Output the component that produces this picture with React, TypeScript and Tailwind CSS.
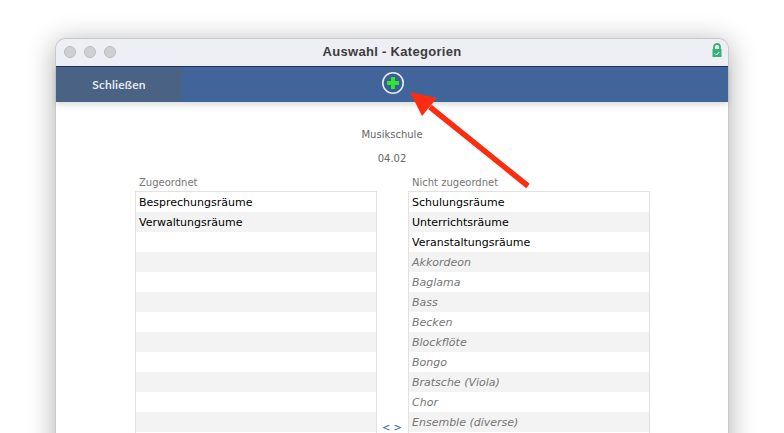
const assigned = ["Besprechungsräume", "Verwaltungsräume"];
const rooms = ["Schulungsräume", "Unterrichtsräume", "Veranstaltungsräume"];
const instruments = ["Akkordeon", "Baglama", "Bass", "Becken", "Blockflöte", "Bongo", "Bratsche (Viola)", "Chor", "Ensemble (diverse)", ""];

function Row({ index, text, muted }: { index: number; text?: string; muted?: boolean }) {
  return (
    <div
      className={`h-5 shrink-0 pl-[3px] pt-px text-[11px] leading-5 whitespace-nowrap ${index % 2 ? "bg-[#f3f3f3]" : "bg-white"} ${
        muted ? "italic text-[#757575]" : "text-black"
      }`}
    >
      {text}
    </div>
  );
}

function Column({ label, children }: { label: string; children: React.ReactNode }) {
  return (
    <div className="flex w-[242px] flex-col">
      <div className="h-[17px] pl-[4px] text-[10px] leading-[18px] text-[#757575]">{label}</div>
      <div className="flex flex-col border-x border-t border-[#e2e2e2]">{children}</div>
    </div>
  );
}

export default function App() {
  const left = Array.from({ length: 13 }, (_, i) => assigned[i] ?? "");
  return (
    <div className="relative h-[433px] w-[784px] overflow-hidden bg-white font-['DejaVu_Sans',sans-serif]">
      <div className="mx-[55px] mt-[38px] h-[500px] rounded-t-[11px] border-x border-t border-[#c9c9cb] bg-white shadow-[0_4px_28px_rgba(0,0,0,0.32)]">
        <div className="relative flex h-[28px] items-center rounded-t-[10px] border-b border-[#1d3559] bg-[#eeeff4] px-2 pb-[2px]">
          <div className="flex gap-2">
            <span className="size-3 rounded-full border border-[#bcbcbe] bg-[#d0d0d3]" />
            <span className="size-3 rounded-full border border-[#bcbcbe] bg-[#d0d0d3]" />
            <span className="size-3 rounded-full border border-[#bcbcbe] bg-[#d0d0d3]" />
          </div>
          <div className="absolute inset-x-0 text-center font-['Liberation_Sans',sans-serif] text-[13px] font-bold tracking-[0.3px] text-[#3c3c3c]">
            Auswahl - Kategorien
          </div>
          <svg width="10" height="14" viewBox="0 0 10 14" className="-mr-[2px] -mt-[4px] ml-auto">
            <path d="M2 7V4a3 3 0 0 1 6 0v3" fill="none" stroke="#35b178" strokeWidth="1.8" />
            <rect x="0.5" y="6" width="9" height="8" fill="#35b178" />
            <path d="M3 10.5l1.5 1.5 2.8-3" fill="none" stroke="#fff" strokeWidth="1" />
          </svg>
        </div>

        <div className="relative flex h-[35px] items-stretch bg-[#41659a] shadow-[0_3px_6px_rgba(0,0,0,0.14)]">
          <div className="flex w-[126px] items-center justify-center bg-[#4a6385] font-['Lato',sans-serif] text-[12px] font-semibold tracking-[0.2px] text-[#f1f3f7]">
            Schließen
          </div>
          <div className="ml-[199px] flex items-center pb-[3px]">
            <svg width="24" height="24" viewBox="0 0 24 24">
              <circle cx="12" cy="12" r="10.2" fill="#3c5f93" stroke="#e6ebf2" strokeWidth="1.6" />
              <path d="M12 6v12M6 12h12" stroke="#2ee62e" strokeWidth="4" />
            </svg>
          </div>
        </div>

        <div className="flex flex-col items-center pt-[21px] text-[10px] text-[#666]">
          <div className="h-[24px] leading-[24px]">Musikschule</div>
          <div className="h-[24px] leading-[24px]">04.02</div>
        </div>

        <div className="flex pl-[79px] pt-[3px]">
          <Column label="Zugeordnet">
            {left.map((text, i) => (
              <Row key={i} index={i} text={text} />
            ))}
          </Column>
          <div className="relative w-[31px]">
            <span className="absolute left-[5px] top-[248px] text-[10px] leading-3 text-[#2f6aa8]">&lt; &gt;</span>
          </div>
          <Column label="Nicht zugeordnet">
            {rooms.map((text, i) => (
              <Row key={text} index={i} text={text} />
            ))}
            {instruments.map((text, i) => (
              <Row key={i} index={i + rooms.length} text={text} muted />
            ))}
          </Column>
        </div>
      </div>

      <svg className="absolute left-[405px] top-[85px]" width="130" height="110" viewBox="0 0 130 110">
        <path d="M123 101L25 22" stroke="#fb2d10" strokeWidth="5.5" />
        <path d="M5 7L32 13L17 31Z" fill="#fb2d10" />
      </svg>
    </div>
  );
}
